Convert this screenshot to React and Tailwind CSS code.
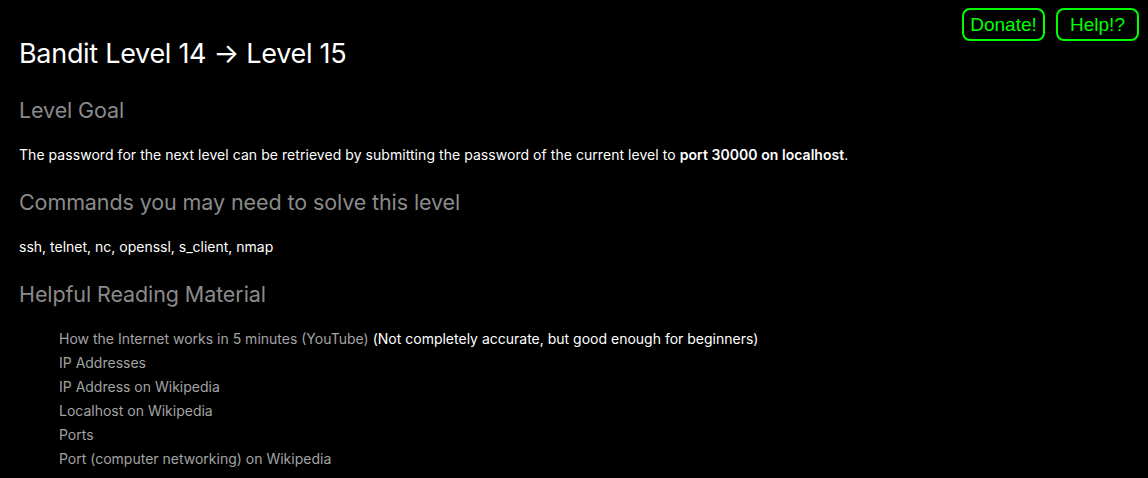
import React from 'react';

const links = [
    { text: 'How the Internet works in 5 minutes (YouTube)', note: '(Not completely accurate, but good enough for beginners)' },
    { text: 'IP Addresses' },
    { text: 'IP Address on Wikipedia' },
    { text: 'Localhost on Wikipedia' },
    { text: 'Ports' },
    { text: 'Port (computer networking) on Wikipedia' },
];

const App = () => {
    return (
        <div className="min-h-[478px] bg-black text-white font-['Inter',sans-serif] relative">
            {/* top right buttons */}
            <div className="absolute top-[8px] right-[9px] flex gap-[11px] font-['Liberation_Sans',Arial,sans-serif]">
                <button className="w-[83px] h-[33px] border-2 border-[#00ff00] rounded-[8px] text-[#00ff00] text-[19px] leading-none">Donate!</button>
                <button className="w-[83px] h-[33px] border-2 border-[#00ff00] rounded-[8px] text-[#00ff00] text-[19px] leading-none">Help!?</button>
            </div>

            <div className="px-[19px] pt-[36px]">
                <h1 className="text-[27px] leading-[36px] font-normal tracking-[-0.3px]">Bandit Level 14 → Level 15</h1>

                <h2 className="mt-[23px] text-[21.5px] leading-[30px] text-[#8a8a8a] tracking-[-0.1px]">Level Goal</h2>
                <p className="mt-[20px] text-[14px] leading-[20px] tracking-[0.05px]">
                    The password for the next level can be retrieved by submitting the password of the current level to <b className="font-semibold">port 30000 on localhost</b>.
                </p>

                <h2 className="mt-[22px] text-[21.5px] leading-[30px] text-[#8a8a8a] tracking-[-0.1px]">Commands you may need to solve this level</h2>
                <p className="mt-[20px] text-[14px] leading-[20px]">ssh, telnet, nc, openssl, s_client, nmap</p>

                <h2 className="mt-[22px] text-[21.5px] leading-[30px] text-[#8a8a8a] tracking-[-0.1px]">Helpful Reading Material</h2>
                <ul className="mt-[18px] pl-[40px] text-[14px] leading-[24px]">
                    {links.map((l) => (
                        <li key={l.text}>
                            <span className="text-[#a3a3a3]">{l.text}</span>
                            {l.note && <span> {l.note}</span>}
                        </li>
                    ))}
                </ul>
            </div>
        </div>
    );
};

export default App;
